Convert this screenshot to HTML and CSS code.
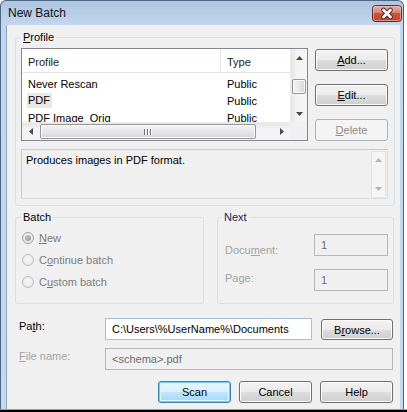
FILE: index.html
```html
<!DOCTYPE html>
<html>
<head>
<meta charset="utf-8">
<link rel="stylesheet" href="styles.css">
</head>
<body>
<div class="screen">
  <div class="window">
    <div class="titlebar">
      <span class="title">New Batch</span>
      <svg class="close" width="30" height="17" viewBox="0 0 30 17">
        <defs>
          <linearGradient id="cg" x1="0" y1="0" x2="0" y2="1">
            <stop offset="0" stop-color="#eab3a6"/>
            <stop offset="0.45" stop-color="#d98572"/>
            <stop offset="0.5" stop-color="#c9553b"/>
            <stop offset="1" stop-color="#c8432a"/>
          </linearGradient>
        </defs>
        <rect x="0.5" y="0.5" width="29" height="16" rx="3" fill="url(#cg)" stroke="#6b2a1f"/>
        <rect x="1.5" y="1.5" width="27" height="14" rx="2" fill="none" stroke="#f3cbbf" stroke-opacity="0.55"/>
        <path d="M11.5 5 L18.5 12 M18.5 5 L11.5 12" stroke="#4f2a24" stroke-width="4.6" stroke-linecap="round"/>
        <path d="M11.5 5 L18.5 12 M18.5 5 L11.5 12" stroke="#ffffff" stroke-width="2.6" stroke-linecap="round"/>
      </svg>
    </div>
    <div class="client">
      <fieldset class="group group-profile">
        <legend><u>P</u>rofile</legend>
        <div class="profile-top">
          <div class="list">
            <div class="list-main">
              <div class="list-view">
                <div class="list-header">
                  <div class="col col-name">Profile</div>
                  <div class="col col-type">Type</div>
                </div>
                <div class="row">
                  <div class="col col-name">Never Rescan</div>
                  <div class="col col-type">Public</div>
                </div>
                <div class="row">
                  <div class="col col-name"><span class="sel">PDF</span></div>
                  <div class="col col-type">Public</div>
                </div>
                <div class="row">
                  <div class="col col-name">PDF Image_Orig</div>
                  <div class="col col-type">Public</div>
                </div>
              </div>
              <div class="vscroll">
                <div class="arrow-box"><svg width="7" height="4" viewBox="0 0 7 4"><polygon points="0,4 3.5,0 7,4" fill="#4a4a4a"/></svg></div>
                <div class="vtrack"><div class="vthumb"></div></div>
                <div class="arrow-box"><svg width="7" height="4" viewBox="0 0 7 4"><polygon points="0,0 7,0 3.5,4" fill="#4a4a4a"/></svg></div>
              </div>
            </div>
            <div class="list-bottom">
              <div class="hscroll">
                <div class="arrow-box arrow-h"><svg width="4" height="7" viewBox="0 0 4 7"><polygon points="4,0 4,7 0,3.5" fill="#4a4a4a"/></svg></div>
                <div class="htrack">
                  <div class="hthumb"><span class="grip"></span><span class="grip"></span><span class="grip"></span></div>
                </div>
                <div class="arrow-box arrow-h"><svg width="4" height="7" viewBox="0 0 4 7"><polygon points="0,0 4,3.5 0,7" fill="#4a4a4a"/></svg></div>
              </div>
              <div class="corner"></div>
            </div>
          </div>
          <div class="side-buttons">
            <button class="btn"><u>A</u>dd...</button>
            <button class="btn"><u>E</u>dit...</button>
            <button class="btn btn-disabled"><u>D</u>elete</button>
          </div>
        </div>
        <div class="desc">
          <div class="desc-text">Produces images in PDF format.</div>
          <div class="desc-scroll">
            <div class="arrow-box"><svg width="7" height="4" viewBox="0 0 7 4"><polygon points="0,4 3.5,0 7,4" fill="#b5b5b5"/></svg></div>
            <div class="arrow-box"><svg width="7" height="4" viewBox="0 0 7 4"><polygon points="0,0 7,0 3.5,4" fill="#b5b5b5"/></svg></div>
          </div>
        </div>
      </fieldset>

      <div class="groups-row">
        <fieldset class="group group-batch">
          <legend>Batch</legend>
          <div class="radio-row"><span class="radio radio-checked"></span><span class="radio-label"><u>N</u>ew</span></div>
          <div class="radio-row"><span class="radio"></span><span class="radio-label">C<u>o</u>ntinue batch</span></div>
          <div class="radio-row"><span class="radio"></span><span class="radio-label">C<u>u</u>stom batch</span></div>
        </fieldset>
        <fieldset class="group group-next">
          <legend>Next</legend>
          <div class="field-row field-row-doc">
            <span class="field-label">Docu<u>m</u>ent:</span>
            <div class="input input-disabled input-small">1</div>
          </div>
          <div class="field-row field-row-page">
            <span class="field-label">Page:</span>
            <div class="input input-disabled input-small">1</div>
          </div>
        </fieldset>
      </div>

      <div class="form-row form-row-path">
        <span class="form-label">Pa<u>t</u>h:</span>
        <div class="input input-path">C:\Users\%UserName%\Documents</div>
        <button class="btn btn-browse">B<u>r</u>owse...</button>
      </div>
      <div class="form-row form-row-file">
        <span class="form-label form-label-disabled"><u>F</u>ile name:</span>
        <div class="input input-disabled input-file">&lt;schema&gt;.pdf</div>
      </div>
      <div class="action-row">
        <button class="btn btn-default">Scan</button>
        <button class="btn">Cancel</button>
        <button class="btn">Help</button>
      </div>
    </div>
  </div>
  <div class="screen-edge"></div>
</div>
</body>
</html>
```

FILE: styles.css
```css
* { box-sizing: border-box; }

html, body {
  margin: 0;
  padding: 0;
  background: #ffffff;
}

body {
  font-family: "Liberation Sans", Arial, sans-serif;
  font-size: 11px;
  line-height: 14px;
  color: #000;
}

.screen {
  width: 407px;
  height: 412px;
  overflow: hidden;
  display: flex;
  flex-direction: column;
}

.window {
  width: 404px;
  height: 409px;
  border: 1px solid #4d6684;
  border-bottom: none;
  border-radius: 6px 6px 0 0;
  background: linear-gradient(#adc5e2, #c2d6ed 24px, #c4d8ee);
  display: flex;
  flex-direction: column;
}

.screen-edge {
  height: 3px;
  border-top: 1px solid #3fbfe9;
  background: #000;
}

.titlebar {
  height: 24px;
  display: flex;
  align-items: center;
  justify-content: space-between;
  padding: 0 1px 0 7px;
}

.title {
  font-size: 12px;
  color: #111;
}

.close { display: block; margin-top: 1px; }

.client {
  flex: 1;
  margin: 0 3px 0 5px;
  border-left: 1px solid #8ea6c3;
  background: #f0f0f0;
  padding: 0 5px 0 8px;
  display: flex;
  flex-direction: column;
}

u { text-decoration: underline; text-underline-offset: 1px; }

/* group boxes */
.group {
  margin: 0;
  border: 1px solid #d5dfe5;
  border-radius: 3px;
  min-width: 0;
}

.group legend {
  padding: 0 2px;
  line-height: 14px;
  color: #000;
}

.group-profile {
  margin-top: 5px;
  padding: 4px 6px 6px 5px;
}

.profile-top {
  display: flex;
  gap: 7px;
}

/* list view */
.list {
  width: 287px;
  height: 93px;
  border: 1px solid #828790;
  background: #fff;
  display: flex;
  flex-direction: column;
}

.list-main {
  height: 74px;
  display: flex;
  overflow: hidden;
}

.list-view {
  flex: 1;
  overflow: hidden;
}

.list-header {
  height: 24px;
  display: flex;
  border-bottom: 1px solid #e5e5e5;
  margin-bottom: 2px;
  color: #1a1a1a;
}

.list-header .col {
  display: flex;
  align-items: center;
  padding-top: 2px;
}

.col-name {
  width: 199px;
  padding-left: 6px;
}

.list-header .col-name {
  border-right: 1px solid #e5e5e5;
}

.col-type {
  flex: 1;
  padding-left: 6px;
}

.row {
  height: 17px;
  display: flex;
  align-items: center;
  white-space: nowrap;
}

.sel {
  display: inline-block;
  background: #e8e8e8;
  line-height: 15px;
  padding: 0 2px 0 1px;
  margin-left: -1px;
}

.vscroll {
  width: 17px;
  display: flex;
  flex-direction: column;
  background: linear-gradient(90deg, #e6e6e6, #f4f4f4 40%, #f4f4f4);
  border-left: 1px solid #ececec;
}

.arrow-box {
  height: 17px;
  display: flex;
  align-items: center;
  justify-content: center;
  flex: none;
}

.arrow-box svg { display: block; }

.arrow-h {
  width: 17px;
  height: 17px;
}

.vtrack {
  flex: 1;
  padding-top: 13px;
}

.vthumb {
  height: 15px;
  margin: 0 1px;
  border: 1px solid #959595;
  border-radius: 2px;
  background: linear-gradient(90deg, #f3f3f3, #e8e8e8 50%, #d6d6d6);
  box-shadow: inset 0 0 0 1px #fbfbfb;
}

.list-bottom {
  flex: 1;
  display: flex;
}

.hscroll {
  flex: 1;
  display: flex;
  background: linear-gradient(#e6e6e6, #f4f4f4 40%, #f4f4f4);
  border-top: 1px solid #ececec;
}

.htrack {
  flex: 1;
  padding: 0 0 0 1px;
  display: flex;
  align-items: center;
}

.hthumb {
  width: 216px;
  height: 15px;
  border: 1px solid #959595;
  border-radius: 2px;
  background: linear-gradient(#f3f3f3, #e8e8e8 50%, #d6d6d6);
  box-shadow: inset 0 0 0 1px #fbfbfb;
  display: flex;
  align-items: center;
  justify-content: center;
  gap: 1px;
}

.grip {
  width: 1px;
  height: 6px;
  background: #6f6f6f;
  box-shadow: 1px 0 0 #fff;
  margin-right: 1px;
}

.corner {
  width: 17px;
  background: #f0f0f0;
}

.side-buttons {
  width: 73px;
  padding-top: 1px;
  display: flex;
  flex-direction: column;
  gap: 13px;
}

/* buttons */
.btn {
  font-family: inherit;
  font-size: 11px;
  height: 22px;
  width: 73px;
  padding: 0;
  color: #000;
  border: 1px solid #707070;
  border-radius: 3px;
  background: linear-gradient(#f2f2f2 0%, #ebebeb 50%, #dddddd 50%, #cfcfcf 100%);
  box-shadow: inset 0 0 0 1px #fbfbfb;
  text-align: center;
}

.btn-disabled {
  color: #8d8d8d;
  border-color: #adb2b5;
  background: #f4f4f4;
  box-shadow: none;
}

.btn-default {
  border-color: #3c7fb1;
  background: linear-gradient(#e9f6fd 0%, #d9f0fc 50%, #bee6fd 50%, #a8d9f4 100%);
  box-shadow: inset 0 0 0 1px #6fd1f5, inset 0 0 0 2px #e0f4fd;
}

/* description */
.desc {
  margin-top: 8px;
  height: 50px;
  border: 1px solid #c9c9c9;
  border-right-color: #dcdcdc;
  border-bottom-color: #dcdcdc;
  display: flex;
  padding: 1px 1px 0 0;
}

.desc-text {
  flex: 1;
  padding: 2px 0 0 4px;
}

.desc-scroll {
  width: 15px;
  border: 1px solid #e4e4e4;
  background: #f5f5f5;
  display: flex;
  flex-direction: column;
  justify-content: space-between;
}

.desc-scroll .arrow-box { height: 16px; }

/* lower groups */
.groups-row {
  margin-top: 4px;
  display: flex;
  gap: 13px;
}

.group-batch {
  width: 189px;
  height: 94px;
  padding: 3px 5px 0 5px;
}

.group-next {
  width: 177px;
  height: 94px;
  padding: 10px 5px 0 7px;
}

.group-next legend {
  margin-left: -3px;
  color: #17235a;
}

.radio-row {
  height: 22px;
  display: flex;
  align-items: center;
  gap: 4px;
  color: #7c7c7c;
}

.radio {
  width: 12px;
  height: 12px;
  border-radius: 50%;
  border: 1px solid #bdbdbd;
  background: radial-gradient(circle at 50% 40%, #f7f7f7, #e4e4e4);
  display: flex;
  align-items: center;
  justify-content: center;
  margin-left: 1px;
}

.radio-checked {
  border-color: #9c9c9c;
}

.radio-checked::after {
  content: "";
  width: 6px;
  height: 6px;
  border-radius: 50%;
  background: radial-gradient(circle at 40% 35%, #c4c4c4, #8a8a8a);
}

.radio-label { margin-left: 1px; }

.field-row {
  display: flex;
  justify-content: space-between;
  align-items: flex-start;
}

.field-row-page { margin-top: 12px; }

.field-label { color: #a3a3a3; }

.field-row-doc .field-label { margin-top: 9px; }
.field-row-page .field-label { margin-top: 2px; }

/* inputs */
.input {
  height: 22px;
  padding: 3px 0 0 6px;
  white-space: nowrap;
}

.input-disabled {
  border: 1px solid #b7b7b7;
  background: #f0f0f0;
  color: #6d6d6d;
}

.input-small { width: 74px; }

.input-path {
  width: 207px;
  border: 1px solid #a9bfd8;
  background: #fff;
  color: #000;
}

.input-file { width: 288px; }

.form-row {
  display: flex;
  align-items: flex-start;
  padding-left: 4px;
}

.form-row-path { margin-top: 14px; }
.form-row-file { margin-top: 8px; }

.form-label {
  width: 86px;
  margin-top: 1px;
}

.form-label-disabled { color: #a3a3a3; }

.btn-browse {
  width: 72px;
  height: 21px;
  margin-left: 9px;
  margin-top: 1px;
}

.action-row {
  margin-top: 11px;
  display: flex;
  justify-content: flex-end;
  gap: 8px;
  padding-right: 2px;
}
```
